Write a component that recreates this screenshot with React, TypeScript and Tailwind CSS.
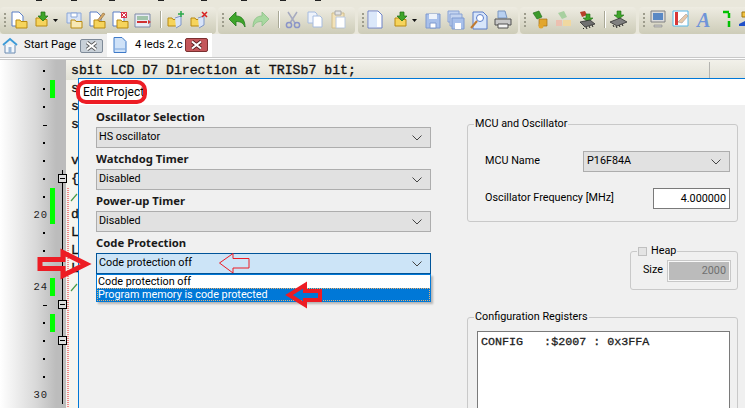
import type { ReactNode } from "react";

const ui = { fontFamily: 'Roboto, "Liberation Sans", sans-serif' };
const bold = { fontFamily: '"Noto Sans", "Liberation Sans", sans-serif' };
const mono = { fontFamily: '"Liberation Mono", monospace' };

function Ic({ children, w = 20 }: { children: ReactNode; w?: number }) {
  return (
    <svg width={w} height="20" viewBox={"0 0 " + w + " 20"} className="shrink-0">
      {children}
    </svg>
  );
}

const Doc = ({ x = 3, y = 2, f = "#fff", s = "#5b7fc7" }: { x?: number; y?: number; f?: string; s?: string }) => (
  <path d={`M${x} ${y}h7l4 4v10h-11z`} fill={f} stroke={s} />
);
const Folder = ({ x = 7, y = 10, f = "#f6d45c" }: { x?: number; y?: number; f?: string }) => (
  <path d={`M${x} ${y}h4l1 1.5h6v6.5h-11z`} fill={f} stroke="#b98a10" />
);
const Sep = ({ className }: { className: string }) => <div className={"w-[2px] h-[17px] bg-[#a9a896] border-r border-white shrink-0 " + className} />;
const Grip = () => (
  <div className="flex flex-col gap-[2px] shrink-0">
    {[0, 1, 2, 3].map((i) => <div key={i} className="w-[2px] h-[2px] bg-[#9d9c8c]" />)}
  </div>
);

function Group({ children, className }: { children: ReactNode; className: string }) {
  return (
    <div className={"h-[27px] shrink-0 flex items-center rounded-[4px] pl-[4px] pb-[2px] bg-gradient-to-b from-[#eeece2] to-[#cdccb8] " + className}>
      {children}
    </div>
  );
}

function Ml({ className, children }: { className: string; children: ReactNode }) {
  return <div className={"shrink-0 flex " + className}>{children}</div>;
}

const ic = {
  newFile: <Ic><Doc x={3} /><Folder x={7} /></Ic>,
  openArrow: (
    <Ic w={24}>
      <Folder x={2} y={8} />
      <path d="M7 2v4h-3l5 5 5-5h-3v-4z" fill="#3fa52a" stroke="#1e6e14" strokeWidth=".7" />
      <path d="M19 9h5l-2.500 3z" fill="#111" />
    </Ic>
  ),
  saveDoc: <Ic><path d="M3 3h14v10h-14z" fill="#d9e4f6" stroke="#8aa6d8" /><path d="M7 3h6v4h-6z" fill="#fff" stroke="#8aa6d8" /><Folder x={7} f="#f7e8b4" /></Ic>,
  editDoc: <Ic><Doc x={3} /><path d="M9 12l7-9 2 1-7 9z" fill="#d8a868" stroke="#8a6a30" strokeWidth=".6" /><Folder x={7} /></Ic>,
  closeDoc: <Ic><Doc x={3} /><path d="M11 2h6v6h-6z" fill="#d8364a" /><path d="M12 3l4 4m0-4l-4 4" stroke="#fff" /><Folder x={7} /></Ic>,
  list: <Ic><path d="M2 4h15v13h-15z" fill="#e8ecf4" stroke="#7e8aa8" /><path d="M4 7h11m-11 2h11" stroke="#5a9a60" /><path d="M4 12h10" stroke="#d03030" strokeWidth="2" /><path d="M15 10l3 2-3 2z" fill="#d03030" /></Ic>,
  folderPlus: <Ic><Folder x={2} y={8} /><path d="M9 8l6-2v9l-5 3" fill="#d8e4f8" stroke="#7e96c8" /><path d="M15 1v6m-3-3h6" stroke="#2aa84a" strokeWidth="1.500" /></Ic>,
  folderX: <Ic><Folder x={2} y={8} /><path d="M9 8l6-2v9l-5 3" fill="#d8e4f8" stroke="#7e96c8" /><path d="M13 2l5 5m0-5l-5 5" stroke="#d82020" strokeWidth="1.500" /></Ic>,
  undo: <Ic><path d="M2 9l7-7v4c5 0 9 3 9 11-2-4-4-5.500-9-5.500v4.500z" fill="#3fa52a" stroke="#1f7a1a" strokeWidth=".8" /></Ic>,
  redo: <Ic><path d="M18 9l-7-7v4c-5 0-9 3-9 11 2-4 4-5.500 9-5.500v4.500z" fill="#a8d8a0" stroke="#8cc088" strokeWidth=".8" /></Ic>,
  cut: <Ic><path d="M5 2l7 11m2-11l-7 11" stroke="#a6aac0" strokeWidth="1.500" /><circle cx="6" cy="15" r="2.600" fill="none" stroke="#8a94c8" strokeWidth="1.500" /><circle cx="14" cy="15" r="2.600" fill="none" stroke="#8a94c8" strokeWidth="1.500" /></Ic>,
  copy: <Ic><path d="M3 2h7l2 2v9h-9z" fill="#eef3fb" stroke="#a6bce0" /><path d="M8 6h7l2 2v9h-9z" fill="#fff" stroke="#a6bce0" /></Ic>,
  paste: <Ic><path d="M3 3h12v15h-12z" fill="#f3e2b8" stroke="#d0bd8c" /><path d="M6 1h6v4h-6z" fill="#e4e4e4" stroke="#a8a8a8" /><path d="M7 7h9v11h-9z" fill="#fff" stroke="#b8c8e0" /></Ic>,
  newDoc: <Ic><path d="M3 1h10l4 4v13h-14z" fill="#fff" stroke="#6c82c8" /><path d="M4 2h8v15h-8z" fill="#dbe8fa" /></Ic>,
  save: <Ic><path d="M3 4h14v14h-14z" fill="#a8c0ea" stroke="#7f9ad0" /><path d="M6 4h8v5h-8z" fill="#eef3fb" /><path d="M7 13h6v5h-6z" fill="#fff" stroke="#7f9ad0" /></Ic>,
  saveAll: <Ic><path d="M2 1h11v11h-11z" fill="#c4d4f0" stroke="#88a2d4" /><path d="M4 4h12v12h-12z" fill="#c4d4f0" stroke="#88a2d4" /><path d="M6 8h12v11h-12z" fill="#a8c0ea" stroke="#7f9ad0" /><path d="M9 13h6v6h-6z" fill="#fff" /></Ic>,
  find: <Ic><path d="M4 2h10l4 4v13h-14z" fill="#d8e6fa" stroke="#5a7cc8" /><circle cx="11" cy="8" r="3.500" fill="#fff" stroke="#5a7cc8" /><path d="M8 11l-6 7" stroke="#c07a30" strokeWidth="2" /></Ic>,
  print: <Ic><path d="M5 1h7l2 7h-9z" fill="#b8d0f0" stroke="#7a96c0" /><path d="M2 9h16v6h-16z" fill="#c8c8c8" stroke="#505050" /><path d="M5 14h10v4h-10z" fill="#f4f4f4" stroke="#505050" /></Ic>,
  build: <Ic><path d="M3 3l6-2 3 6-5 2z" fill="#3d9a2c" stroke="#1f6a18" strokeWidth=".6" /><path d="M9 9h8v7h-8z" fill="#e2a62e" stroke="#a0701a" strokeWidth=".7" /><circle cx="11" cy="16" r="2.500" fill="#e2a62e" /></Ic>,
  buildFade: <Ic><path d="M5 3l6-2 3 6-5 2z" fill="#a8d0a0" /><path d="M3 10h6v6h-6z" fill="#ecc0b0" /><path d="M10 10h8v6h-8z" fill="#f0d8a0" /></Ic>,
  chipRed: <Ic w={22}><path d="M4 2l5-1 2 4-5 2z" fill="#b8402a" /><path d="M10 4v4h-3l5 4 5-4h-3v-4z" fill="#3fa52a" stroke="#1e6e14" strokeWidth=".6" /><path d="M4 12l10-2 5 4-10 3z" fill="#707070" stroke="#222" strokeWidth=".7" /><path d="M7 18l1 1m2-2l1 2m2-3l1 2m2-3l1 2" stroke="#222" /></Ic>,
  chip: <Ic w={22}><path d="M9 1v4h-3l5 4 5-4h-3v-4z" fill="#3fa52a" stroke="#1e6e14" strokeWidth=".6" /><path d="M2 12l10-4 7 4-10 4z" fill="#808080" stroke="#222" strokeWidth=".7" /><path d="M5 15l1 2m2-1l1 2m2-3l1 2m2-3l1 2" stroke="#222" /></Ic>,
  monitor: <Ic><path d="M3 1h14v11h-14z" fill="#dcdcdc" stroke="#808080" /><path d="M5 3h10v7h-10z" fill="#5a88c4" /><path d="M6 15h8v2h-8z" fill="#c8c8c8" stroke="#888" strokeWidth=".6" /></Ic>,
  table: <Ic><path d="M2 1h15v15h-15z" fill="#fff" stroke="#58b8e8" /><path d="M4 2h3v13h-3z" fill="#d83838" /><path d="M7 12l8-8 2 2-6 7z" fill="#e8c8a8" stroke="#909090" strokeWidth=".5" /></Ic>,
  seg: <Ic w={10}><path d="M1 2h6" stroke="#00c000" strokeWidth="2.500" /><path d="M7 3v5m0 3v6" stroke="#00c000" strokeWidth="2.500" /></Ic>,
  extra: <Ic w={10}><path d="M3 2h5v5h-5z" fill="#f0c040" stroke="#a07810" /><path d="M0 14l8-4v6h-8z" fill="#2050c8" /></Ic>,
};

const TabX = ({ className, s }: { className: string; s: string }) => (
  <div className={"w-[23px] h-[14px] rounded-[2px] border flex items-center justify-center shrink-0 " + className}>
    <svg width="13" height="10" viewBox="0 0 13 10">
      <path d="M2 1.500l9 7m0-7l-9 7" stroke={s} strokeWidth="3.600" />
      <path d="M2 1.500l9 7m0-7l-9 7" stroke="#fff" strokeWidth="2" />
    </svg>
  </div>
);

const rows = Array.from({ length: 19 }, (_, i) => i + 12);
const greenRows = [13, 19, 20, 24, 26];
const foldRows = [18, 25, 27];
const codeChars: Record<number, string> = {
  13: "s", 14: "s", 15: "s", 17: "v", 18: "{", 20: "d", 21: "L", 22: "L", 23: "L",
};

const Chevron = () => (
  <svg width="10" height="6" viewBox="0 0 10 6"><path d="M.5 .5l4.500 4.500 4.500-4.500" fill="none" stroke="#444" /></svg>
);

function Combo({ value, active }: { value: string; active?: boolean }) {
  return (
    <div
      className={
        "h-[21px] flex items-center justify-between pl-[2px] pr-[8px] border " +
        (active ? "bg-[#cce4f7] border-[#005499]" : "bg-[#e1e1e1] border-[#adadad]")
      }
    >
      <span>{value}</span>
      <Chevron />
    </div>
  );
}

function Field({ label, value, active }: { label: string; value: string; active?: boolean }) {
  return (
    <div className="flex flex-col">
      <div className="h-[21px] font-bold text-[11.300px] leading-[21px] text-[#1a1a1a]" style={bold}>{label}</div>
      <Combo value={value} active={active} />
    </div>
  );
}

function Box({ title, className, children }: { title: ReactNode; className: string; children?: ReactNode }) {
  return (
    <div className={"relative border border-[#c9c9c9] rounded-[3px] " + className}>
      <div className="absolute -top-[9px] left-[6px] bg-[#f0f0f0] leading-[16px] flex items-center gap-[4px] px-[1px]">{title}</div>
      {children}
    </div>
  );
}

export default function App() {
  return (
    <div className="relative w-[745px] h-[408px] overflow-hidden bg-[#efefef] text-black text-[10.800px]" style={ui}>
      {/* menu strip */}
      <div className="h-[7px] bg-[#e9e7db] relative overflow-hidden">
        {[36, 71, 109, 158, 201, 241, 280, 315].map((x) => (
          <div key={x} className="h-px w-[6px] bg-[#222] absolute top-0" style={{ left: x }} />
        ))}
      </div>

      {/* toolbars */}
      <div className="h-[27px] flex gap-[2px] bg-[#e9e7db] overflow-hidden">
        <Group className="w-[216px]">
          <Grip />
          <Ml className="ml-[3px]">{ic.newFile}</Ml><Ml className="ml-[5px]">{ic.openArrow}</Ml><Ml className="ml-[6px]">{ic.saveDoc}</Ml>
          <Ml className="ml-[3px]">{ic.editDoc}</Ml><Ml className="ml-[3px]">{ic.closeDoc}</Ml><Ml className="ml-[3px]">{ic.list}</Ml>
          <Sep className="ml-[7px]" />
          <Ml className="ml-[4px]">{ic.folderPlus}</Ml><Ml className="ml-[3px]">{ic.folderX}</Ml>
        </Group>
        <Group className="w-[137px]">
          <Grip />
          <Ml className="ml-[3px]">{ic.undo}</Ml><Ml className="ml-[4px]">{ic.redo}</Ml>
          <Sep className="ml-[7px]" />
          <Ml className="ml-[3px]">{ic.cut}</Ml><Ml className="ml-[2px]">{ic.copy}</Ml><Ml className="ml-[4px]">{ic.paste}</Ml>
        </Group>
        <Group className="w-[160px] ml-px">
          <Grip />
          <Ml className="ml-[1px]">{ic.newDoc}</Ml><Ml className="ml-[8px]">{ic.openArrow}</Ml><Ml className="ml-[6px]">{ic.save}</Ml>
          <Ml className="ml-[3px]">{ic.saveAll}</Ml><Ml className="ml-[3px]">{ic.find}</Ml><Ml className="ml-[4px]">{ic.print}</Ml>
        </Group>
        <Group className="w-[116px]">
          <Grip />
          <Ml className="ml-[4px]">{ic.build}</Ml><Ml className="ml-[3px]">{ic.buildFade}</Ml><Ml className="ml-[3px]">{ic.chipRed}</Ml>
          <Sep className="ml-[6px]" />
          <Ml className="ml-[2px]">{ic.chip}</Ml>
        </Group>
        <Group className="w-[120px] ml-px">
          <Grip />
          <Ml className="ml-[3px]">{ic.monitor}</Ml><Ml className="ml-[3px]">{ic.table}</Ml>
          <span className="ml-[6px] w-[14px] font-bold italic text-[20px] leading-none text-[#6f94d8]" style={{ fontFamily: '"Liberation Serif", serif' }}>A</span>
          <Ml className="ml-[11px]">{ic.seg}</Ml><Ml className="ml-[7px]">{ic.extra}</Ml>
        </Group>
      </div>

      {/* tabs */}
      <div className="h-[23px] flex items-end text-[11.200px]">
        <div className="h-[23px] w-[107px] flex items-center pl-[2px] whitespace-nowrap">
          <svg width="16" height="17" viewBox="0 0 16 17" className="shrink-0"><path d="M1 8l7-6 7 6" fill="none" stroke="#3a9ad8" strokeWidth="1.800" /><path d="M3 8v8h10v-8" fill="#f4f8fc" stroke="#6a8ab0" /><path d="M6.500 10h3v6h-3z" fill="#9ab8d8" /></svg>
          <span className="ml-[6px] w-[56px]">Start Page</span>
          <TabX className="border-[#7e8a98] bg-[#c8d0d8]" s="#555" />
        </div>
        <div className="h-[24px] w-[105px] bg-white flex items-center pl-[6px] whitespace-nowrap">
          <svg width="14" height="16" viewBox="0 0 14 16" className="shrink-0"><path d="M1 .5h8l4 4v11h-12z" fill="#cfe2f8" stroke="#3f7ac8" /><path d="M2 12h10" stroke="#7aa6de" /></svg>
          <span className="ml-[8px] w-[50px]">4 leds 2.c</span>
          <TabX className="border-[#7a3030] bg-[#c4565a]" s="#552020" />
        </div>
      </div>
      <div className="h-[3px] border-y border-[#c8c8c8] bg-white" />

      {/* editor */}
      <div className="h-[348px] flex">
        <div className="w-[66px] pt-[2px] bg-[linear-gradient(to_right,#fff,#d8d8d8_55%,#bcbcbc_85%,#bcbcbc)] text-[10.500px] tracking-[1px] text-[#222]" style={mono}>
          {rows.map((n) => (
            <div key={n} className="h-[18px] flex items-center">
              <div className="w-[48px] flex justify-end">
                {n % 10 === 0 || n === 24 ? <span className="leading-none">{n}</span>
                  : n === 15 || n === 25 ? <div className="w-[4px] h-px bg-black mr-[1px]" />
                  : <div className="w-[2px] h-[2px] bg-black mr-[3px]" />}
              </div>
              <div className={"w-[5px] ml-[2px] h-[18px] " + (greenRows.includes(n) ? "bg-[#00ff00]" : "")} />
              <div className="relative w-[11px] h-[18px]">
                {n >= 18 && <div className="absolute left-[7px] top-0 bottom-0 w-px bg-black" />}
                {foldRows.includes(n) && (
                  <div className="absolute left-[3px] top-[4px] w-[9px] h-[9px] border border-black bg-[#ddd] flex items-center justify-center">
                    <div className="w-[5px] h-px bg-black" />
                  </div>
                )}
              </div>
            </div>
          ))}
        </div>
        <div className="flex-1 bg-[#f6f5ef] text-[13.200px] leading-[18px] text-[#111] whitespace-pre [-webkit-text-stroke:0.35px_#111]" style={mono}>
          <div className="h-[20px] pt-[2px] pl-[5px] flex bg-gradient-to-b from-[#f2f1ea] to-[#e2e1d6]">
            <div className="w-[639px] border-r border-[#b4b4b0] h-[18px]">sbit LCD D7 Direction at TRISb7 bit;</div>
          </div>
          {rows.slice(1).map((n) => (
            <div key={n} className="h-[18px] pl-[5px]">{codeChars[n] || " "}</div>
          ))}
        </div>
      </div>

      {/* dialog */}
      <div className="absolute left-[78px] top-[78px] right-0 bottom-0 border-t border-l border-[#0078d7] bg-[#f0f0f0]">
        <div className="h-[26px] bg-white pl-[4px] leading-[26px] text-[12px]">Edit Project</div>
        <div className="flex">
          <div className="w-[353px] pl-[17px] pt-[1px]">
            <div className="w-[335px] flex flex-col">
              <Field label="Oscillator Selection" value="HS oscillator" />
              <Field label="Watchdog Timer" value="Disabled" />
              <Field label="Power-up Timer" value="Disabled" />
              <div className="relative">
                <Field label="Code Protection" value="Code protection off" active />
                <div className="absolute top-[42px] left-0 right-0 bg-white border border-[#0078d7] leading-[13px] shadow-[2px_2px_2px_rgba(0,0,0,0.25)]">
                  <div className="h-[13px] pl-[1px]">Code protection off</div>
                  <div className="h-[13px] pl-[1px] bg-[#0078d7] text-white outline-1 outline-dotted -outline-offset-1 outline-[#e8b070]">Program memory is code protected</div>
                </div>
              </div>
            </div>
          </div>
          <div className="flex-1 pl-[35px] pr-[7px] pt-[19px] flex flex-col">
            <Box title="MCU and Oscillator" className="h-[98px] pt-[26px] pl-[17px] pr-[7px]">
              <div className="flex items-center justify-between h-[21px]">
                <span>MCU Name</span>
                <div className="w-[147px] h-[21px] bg-[#e1e1e1] border border-[#adadad] flex items-center justify-between pl-[3px] pr-[8px]">
                  <span>P16F84A</span>
                  <Chevron />
                </div>
              </div>
              <div className="flex items-center justify-between h-[21px] mt-[16px]">
                <span>Oscillator Frequency [MHz]</span>
                <div className="w-[77px] h-[21px] bg-white border border-[#7a7a7a] text-right pr-[3px] leading-[19px]">4.000000</div>
              </div>
            </Box>
            <Box
              title={<><span className="w-[9px] h-[9px] border border-[#c0c0c0] bg-[#e4e4e4]" /><span>Heap</span></>}
              className="self-end w-[108px] h-[39px] mt-[29px] flex items-center justify-end pr-[7px] gap-[5px]"
            >
              <span>Size</span>
              <div className="w-[62px] h-[20px] bg-[#bbb] border border-[#f8f8f8] outline outline-1 outline-[#c8c8c8] text-right pr-[3px] leading-[18px] text-[#707070]">2000</div>
            </Box>
            <Box title="Configuration Registers" className="h-[120px] mt-[27px] pt-[13px] pl-[9px] pr-[7px]">
              <div className="h-[90px] bg-white border border-[#7a7a7a] pl-[3px] pt-[2px] text-[11.700px] leading-[16px] text-[#222] whitespace-pre [-webkit-text-stroke:0.3px_#222]" style={mono}>CONFIG   :$2007 : 0x3FFA</div>
            </Box>
          </div>
        </div>
      </div>

      {/* red markup */}
      <div className="absolute left-[76px] top-[80px] w-[71px] h-[24px] rounded-[10px] border-[4px] border-[#ed1c24]" />
      <svg className="absolute left-0 top-0 pointer-events-none" width="745" height="408" viewBox="0 0 745 408">
        <path d="M40 259.500h23v-7l23 11.500-23 11.500v-7h-23z" fill="none" stroke="#ed1c24" strokeWidth="5" />
        <path d="M249 258.500h-16v-5l-13.500 9.500 13.500 10v-5h16z" fill="none" stroke="#ed1c24" />
        <path d="M320 291h-15v-6l-16 10 16 10v-5h15z" fill="none" stroke="#ed1c24" strokeWidth="4" />
        <path d="M68 188v220" stroke="#ed1c24" strokeDasharray="1 1" />
        <path d="M71 201l6-7" stroke="#4a9a4a" strokeWidth="1.200" />
        <path d="M71 291l6-7" stroke="#4a9a4a" strokeWidth="1.200" />
      </svg>
    </div>
  );
}
